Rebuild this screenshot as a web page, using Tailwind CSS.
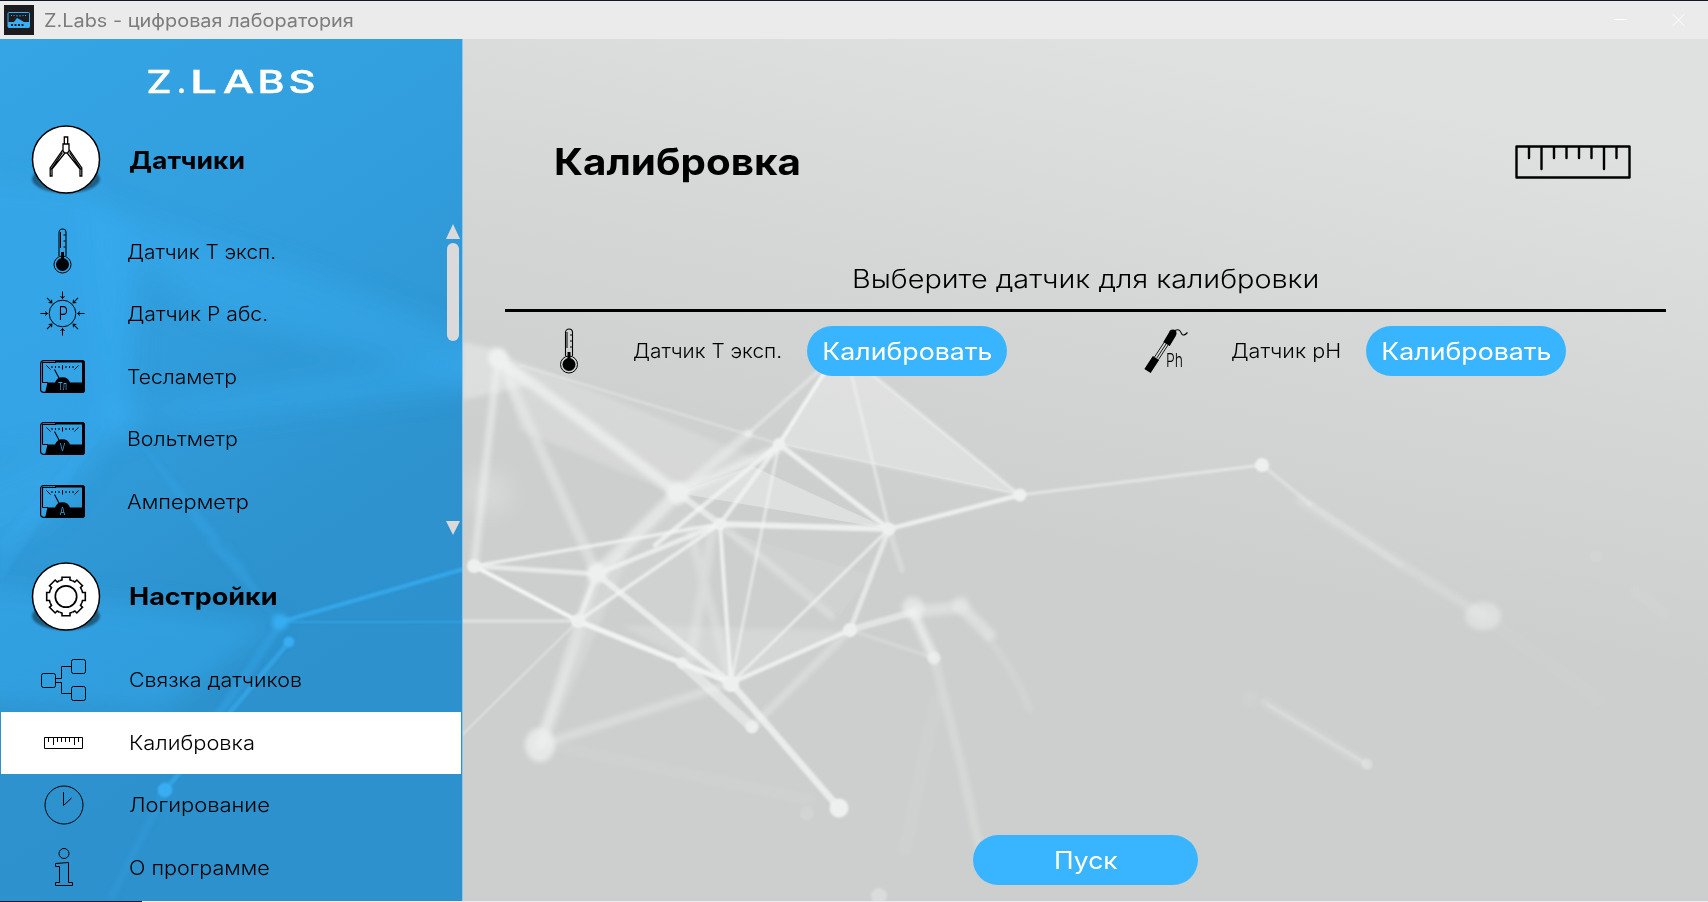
<!DOCTYPE html>
<html lang="ru">
<head>
<meta charset="utf-8">
<title>Z.Labs - цифровая лаборатория</title>
<script src="https://cdn.jsdelivr.net/npm/@tailwindcss/browser@4"></script>
</head>
<body class="w-[1708px] h-[902px] overflow-hidden font-['Inter','Noto_Sans',sans-serif] font-light text-black whitespace-nowrap">
<svg class="absolute size-0">
  <defs>
    <symbol id="thermo" viewBox="0 0 20 46" overflow="visible">
      <path d="M6.500 28V4.500a3.500 3.500 0 0 1 7 0V28" fill="none" stroke="#000" stroke-width="1.100"/>
      <circle cx="10" cy="36.500" r="8.500" fill="none" stroke="#000" stroke-width="1"/>
      <circle cx="10" cy="36.500" r="6.500"/>
      <path d="M8.500 24h3v8h-3z"/>
      <path d="M8 4v16M11 7h2.500M11 13h2.500M11 19h2.500" stroke="#000" stroke-width="1" fill="none"/>
    </symbol>
    <symbol id="meter" viewBox="0 0 45 33" overflow="visible">
      <rect x=".6" y=".6" width="43.800" height="31.800" rx="3" fill="none" stroke="#000" stroke-width="1.200"/>
      <path d="M15 0H42a3 3 0 0 1 3 3V30a3 3 0 0 1-3 3H5l2.500-10.500H15a8 8 0 0 1 15 0H42V2.500H15z"/>
      <path d="M2.500 22.500V2.500H16M2.500 22.500H8M19.500 19 14.500 9.500" fill="none" stroke="#000" stroke-width="1.100"/>
      <path d="M6.500 5.500l4 4M38.500 5.500l-4 4M22.500 5v4.500M12 6v2M15.500 6v2M19 6v2M26 6v2M29.500 6v2M33 6v2" stroke="#000" stroke-width="1" fill="none"/>
    </symbol>
    <g id="arr"><path d="M0-22v7M-2-17.500 0-15l2-2.500" fill="none" stroke="#000" stroke-width="1"/></g>
    <path id="tooth" d="M-6.500-15.800-4-16.500V-19.300H4V-16.500L6.500-15.800" fill="none" stroke="#000" stroke-width="1.600"/>
    <filter id="b1" x="-20%" y="-20%" width="140%" height="140%"><feGaussianBlur stdDeviation="1"/></filter>
    <filter id="b3" x="-20%" y="-20%" width="140%" height="140%"><feGaussianBlur stdDeviation="2.600"/></filter>
    <filter id="b9" x="-30%" y="-30%" width="160%" height="160%"><feGaussianBlur stdDeviation="12"/></filter>
    <linearGradient id="grey" gradientUnits="userSpaceOnUse" x1="1000" y1="20" x2="900" y2="520"><stop offset="0" stop-color="#dfe1e0"/><stop offset=".5" stop-color="#d5d7d6"/><stop offset="1" stop-color="#cdcfce"/></linearGradient>
    <linearGradient id="blue" x1="0" y1="0" x2=".35" y2="1"><stop offset="0" stop-color="#35a5e5"/><stop offset=".45" stop-color="#319cdb"/><stop offset=".75" stop-color="#2d92cd"/><stop offset="1" stop-color="#2d91cd"/></linearGradient>
  </defs>
</svg>

<div class="relative flex flex-col w-[1708px] h-[902px] bg-[#101828]">
  <header class="mt-px h-[38px] flex items-center bg-[#ebebeb] pl-1">
    <svg class="size-[30px]" viewBox="0 0 30 30"><rect width="30" height="30" fill="#1c1c1e"/><rect x="4" y="7.500" width="21.500" height="15" rx="1" fill="none" stroke="#39b0f5" stroke-width="1"/><path d="M4 17h6l3-4 2 1 5 3h5.500v5.500H4z" fill="#39b0f5"/><path d="M7 10l1 1M10 10v1M13 10v1.500M16 10v1.500M19 10v1M22 10l-1 1" stroke="#39b0f5"/><path d="M7 20h14" stroke="#1c1c1e" stroke-width="2" stroke-dasharray="2 1.500"/></svg>
    <h1 class="ml-[9.500px] text-[18px] font-normal text-[#7c7c7c] origin-left scale-x-[1.105]">Z.Labs - цифровая лаборатория</h1>
    <svg class="ml-auto mr-[22px] w-[72px] h-[14px]" viewBox="0 0 72 14" fill="none" stroke="#fff" stroke-width="1"><path d="M0 6.500h12.500M58.500 1l12 12M70.500 1l-12 12"/></svg>
  </header>

  <div class="relative flex h-[862px]">
    <svg class="absolute inset-0" width="1708" height="862" viewBox="0 39 1708 862">
      <rect y="39" width="1708" height="862" fill="url(#grey)"/>
      <g fill="#fff">
        <path d="M462 342 498 350 530 385 462 400z" opacity=".3" filter="url(#b3)"/>
        <g filter="url(#b3)">
          <path d="M498 352 760 460 678 495 520 430z" opacity=".18"/>
          <path d="M597 574 678 493 720 524 700 660 597 574z" opacity=".08"/>
          <path d="M620 625 850 630 731 683z" opacity=".16"/>
        </g>
        <ellipse cx="488" cy="493" rx="24" ry="22" opacity=".22" filter="url(#b9)"/>
        <path d="M779 444 840 348 1020 495z" opacity=".3"/>
        <path d="M678 493 752 466 889 529z" opacity=".35"/>
        <path d="M720 530 870 575 840 615z" opacity=".08"/>
      </g>
      <g stroke="#f4f6f5" fill="none" stroke-linecap="round">
        <g filter="url(#b3)">
          <path d="M498 358 678 493" stroke-width="11" opacity=".6"/>
          <path d="M498 358 474 566" stroke-width="7" opacity=".55"/>
          <path d="M500 360 597 574" stroke-width="10" opacity=".38"/>
          <path d="M678 493 597 574" stroke-width="13" opacity=".55"/>
          <path d="M678 493 748 434" stroke-width="9" opacity=".45"/>
          <path d="M678 493 779 448" stroke-width="9" opacity=".55"/>
          <path d="M597 574 540 745" stroke-width="11" opacity=".45"/>
          <path d="M620 560 545 735" stroke-width="13" opacity=".2"/>
          <path d="M540 745 731 683" stroke-width="8" opacity=".35"/>
          <path d="M690 530 731 683M712 530 690 660" stroke-width="9" opacity=".28"/>
          <path d="M720 524 832 616" stroke-width="7" opacity=".35"/>
          <path d="M913 612 961 607 990 635" stroke-width="12" opacity=".4"/>
          <path d="M985 635Q1015 670 1030 710" stroke-width="6" opacity=".15"/>
          <path d="M913 612 934 658" stroke-width="9" opacity=".65"/>
          <path d="M934 658 960 760 980 850" stroke-width="8" opacity=".25"/>
          <path d="M936 700 905 850" stroke-width="12" opacity=".08"/>
          <path d="M850 630 752 727" stroke-width="7" opacity=".35"/>
          <path d="M1300 500 1483 616" stroke-width="9" opacity=".2"/>
          <path d="M1483 616 1600 700" stroke-width="12" opacity=".06"/>
          <path d="M550 745 810 800" stroke-width="10" opacity=".08"/>
          <path d="M1635 590 1665 615" stroke-width="10" opacity=".08"/>
          <path d="M1264 702 1367 765" stroke-width="8" opacity=".2"/>
        </g>
        <g filter="url(#b1)">
          <path d="M779 444 840 348" stroke-width="4" opacity=".9"/>
          <path d="M748 434 840 352" stroke-width="4" opacity=".4"/>
          <path d="M520 365 779 444" stroke-width="2.500" opacity=".35"/>
          <path d="M840 348 1020 495M846 352 889 529" stroke-width="3.500" opacity=".5"/>
          <path d="M779 444 1020 495" stroke-width="2" opacity=".4"/>
          <path d="M779 444 889 529" stroke-width="5" opacity=".8"/>
          <path d="M779 444 720 524M779 444 655 545" stroke-width="4.500" opacity=".75"/>
          <path d="M779 444 731 683" stroke-width="3" opacity=".6"/>
          <path d="M720 524 889 529" stroke-width="6" opacity=".8"/>
          <path d="M889 529 1020 495" stroke-width="4.500" opacity=".8"/>
          <path d="M889 529 731 683" stroke-width="3" opacity=".7"/>
          <path d="M889 529 850 630" stroke-width="5" opacity=".6"/>
          <path d="M889 529 902 570" stroke-width="6" opacity=".25"/>
          <path d="M720 524 731 683" stroke-width="4" opacity=".8"/>
          <path d="M720 524 474 566M720 524 578 621" stroke-width="3.500" opacity=".75"/>
          <path d="M720 524 597 574" stroke-width="5" opacity=".7"/>
          <path d="M720 524 678 493" stroke-width="6" opacity=".6"/>
          <path d="M474 566 597 574" stroke-width="5" opacity=".65"/>
          <path d="M474 566 578 621" stroke-width="4" opacity="1"/>
          <path d="M597 574 578 621" stroke-width="5" opacity=".6"/>
          <path d="M597 574 731 683" stroke-width="6" opacity=".7"/>
          <path d="M578 621 682 663 731 683" stroke-width="5.500" opacity=".9"/>
          <path d="M682 663 752 727" stroke-width="10" opacity=".55"/>
          <path d="M731 683 839 808" stroke-width="7" opacity=".75"/>
          <path d="M731 683 850 630" stroke-width="4.500" opacity=".8"/>
          <path d="M850 630 913 612" stroke-width="7" opacity=".55"/>
          <path d="M850 630 934 658" stroke-width="4" opacity=".2"/>
          <path d="M462 621H578" stroke-width="3" opacity=".55"/>
          <path d="M578 621 462 735" stroke-width="2" opacity=".45"/>
          <path d="M1020 495 1262 465" stroke-width="3" opacity=".55"/>
          <path d="M1262 465 1310 504" stroke-width="4" opacity=".35"/>
          <path d="M1310 504 1400 565" stroke-width="6" opacity=".15"/>
          <path d="M1268 705 1365 763" stroke-width="3" opacity=".2"/>
        </g>
      </g>
      <g fill="#eef0ef">
        <g filter="url(#b3)"><circle cx="498" cy="358" r="10"/><circle cx="678" cy="493" r="11"/><circle cx="597" cy="573" r="10"/><ellipse cx="540" cy="745" rx="15" ry="17" opacity=".75"/><circle cx="913" cy="608" r="11" opacity=".65"/><circle cx="961" cy="605" r="9" opacity=".4"/><ellipse cx="1483" cy="616" rx="18" ry="14" opacity=".5"/><circle cx="1250" cy="699" r="8" opacity=".1"/></g>
        <g filter="url(#b1)"><circle cx="779" cy="444" r="6"/><circle cx="720" cy="524" r="6"/><circle cx="889" cy="529" r="6.500"/><circle cx="1020" cy="495" r="6.500"/><circle cx="474" cy="566" r="7"/><circle cx="578" cy="621" r="7"/><circle cx="731" cy="684" r="8"/><circle cx="682" cy="663" r="6" opacity=".7"/><circle cx="752" cy="727" r="6.500" opacity=".8"/><circle cx="839" cy="808" r="9.500"/><circle cx="850" cy="630" r="7"/><circle cx="934" cy="658" r="6.500" opacity=".7"/><circle cx="748" cy="434" r="4" opacity=".5"/><circle cx="1262" cy="465" r="7"/><circle cx="1367" cy="764" r="5.500" opacity=".35"/><circle cx="807" cy="813" r="7" opacity=".15"/><circle cx="879" cy="896" r="8" opacity=".4"/><circle cx="1596" cy="556" r="6" opacity=".12"/></g>
      </g>
    </svg>

    <aside class="relative w-[463px] h-full flex flex-col border-r border-[#8cc6ec]">
      <svg class="absolute inset-0" width="462" height="862" viewBox="0 39 462 862">
        <rect y="39" width="462" height="862" fill="url(#blue)"/>
        <g fill="#38adf2">
          <g filter="url(#b9)">
            <path d="M-60 180 90 190 130 230 120 430-60 470z" opacity=".42"/>
            <path d="M80 200 135 215 300 270 500 345 500 390 200 310 140 260 130 420 105 420z" opacity=".42"/>
            <path d="M-60 580 280 622 160 712-60 700z" opacity=".45"/>
            <path d="M120 410 500 350 500 385 200 420z" opacity=".45"/>
            <path d="M120 420-60 490-60 570 50 520z" opacity=".5"/>
            <circle cx="119" cy="418" r="18" opacity=".7"/>
          </g>
          <g filter="url(#b3)">
            <path d="M110 420 0 580 0 540zM125 420 225 545 250 570 200 530zM205 540 278 622 230 545z" opacity=".3"/>
            <circle cx="280" cy="622" r="8"/>
            <path d="M280 625 215 720" stroke="#38adf2" stroke-width="7" opacity=".4"/>
            <path d="M165 790 110 901" stroke="#38adf2" stroke-width="8" opacity=".18"/>
          </g>
          <g filter="url(#b1)" stroke="#38adf2">
            <path d="M280 622 474 566" stroke-width="4" opacity=".8"/>
            <path d="M280 622H474" stroke-width="2" opacity=".6"/>
            <path d="M289 642 165 790" stroke-width="5" opacity=".6"/>
            <circle cx="289" cy="642" r="5"/><circle cx="165" cy="790" r="7"/>
          </g>
        </g>
      </svg>
      <div class="relative flex flex-col h-full">
        <svg class="mt-[26px] ml-[142px]" width="178" height="34" viewBox="142 65 178 34" fill="#fff" font-family="Inter, sans-serif" font-weight="500" font-size="31.500" overflow="visible" stroke="#fff" stroke-width=".5"><text y="93"><tspan x="146.500" textLength="25" lengthAdjust="spacingAndGlyphs">Z</tspan><tspan x="177" textLength="9" lengthAdjust="spacingAndGlyphs">.</tspan><tspan x="190" textLength="27" lengthAdjust="spacingAndGlyphs">L</tspan><tspan x="223" textLength="31" lengthAdjust="spacingAndGlyphs">A</tspan><tspan x="257.500" textLength="27" lengthAdjust="spacingAndGlyphs">B</tspan><tspan x="288.500" textLength="27" lengthAdjust="spacingAndGlyphs">S</tspan></text></svg>

        <div class="mt-[22px] h-[78px] flex items-center pl-[27px]">
          <svg width="78" height="78" viewBox="-39 -38.500 78 78">
            <ellipse cy="19.500" rx="34" ry="14" opacity=".42" filter="url(#b1)"/>
            <circle r="33.500" fill="#fff" stroke="#000" stroke-width="1.500"/>
            <path d="M-1.700-22.500h3.400v7h-3.400zM-3-15.500h6v7l-1.500 2h-3l-1.500-2zM-3-10-15.800 8.500V16.500h1.800V9.500L-1.500-6M3-10 15.800 8.500V16.500H14V9.500L1.500-6M-3.500-7-15 10M3.500-7 15 10" fill="none" stroke="#000" stroke-width="1.300"/>
          </svg>
          <h2 class="ml-6 pt-px text-[24px] font-bold origin-left scale-x-[1.105]">Датчики</h2>
        </div>

        <div class="mt-[21px] h-[313px] flex">
          <ul class="flex-1">
            <li class="h-[62.500px] flex items-center"><svg class="ml-[40px]" width="45" height="46" viewBox="-12.500 0 45 46"><use href="#thermo" width="20" height="46"/></svg><span class="ml-[42px] pt-[2px] text-[19.600px] origin-left scale-x-[1.062]">Датчик Т эксп.</span></li>
            <li class="h-[62.500px] flex items-center"><svg class="ml-[40px]" width="45" height="45" viewBox="-22.500 -22.500 45 45"><circle r="13.300" fill="none" stroke="#000"/><use href="#arr"/><use href="#arr" transform="rotate(45)"/><use href="#arr" transform="rotate(90)"/><use href="#arr" transform="rotate(135)"/><use href="#arr" transform="rotate(180)"/><use href="#arr" transform="rotate(225)"/><use href="#arr" transform="rotate(270)"/><use href="#arr" transform="rotate(315)"/><text x=".8" y="6.800" text-anchor="middle" font-size="18.500" font-weight="300" textLength="9.500" lengthAdjust="spacingAndGlyphs">P</text></svg><span class="ml-[42px] pt-[2px] text-[19.600px] origin-left scale-x-[1.083]">Датчик Р абс.</span></li>
            <li class="h-[62.500px] flex items-center"><svg class="ml-[40px]" width="45" height="33" viewBox="0 0 45 33"><use href="#meter" width="45" height="33"/><text x="22.500" y="30" text-anchor="middle" font-size="11" font-weight="400" fill="#36a3e2" textLength="9" lengthAdjust="spacingAndGlyphs">Тл</text></svg><span class="ml-[42px] pt-[2px] text-[19.600px] origin-left scale-x-[1.075]">Тесламетр</span></li>
            <li class="h-[62.500px] flex items-center"><svg class="ml-[40px]" width="45" height="33" viewBox="0 0 45 33"><use href="#meter" width="45" height="33"/><text x="22.500" y="29" text-anchor="middle" font-size="10" font-weight="400" fill="#36a3e2" textLength="5.500" lengthAdjust="spacingAndGlyphs">V</text></svg><span class="ml-[42px] pt-[2px] text-[19.600px] origin-left scale-x-[1.09]">Вольтметр</span></li>
            <li class="h-[62.500px] flex items-center"><svg class="ml-[40px]" width="45" height="33" viewBox="0 0 45 33"><use href="#meter" width="45" height="33"/><text x="22.500" y="29.500" text-anchor="middle" font-size="10" font-weight="400" fill="#36a3e2" textLength="5.500" lengthAdjust="spacingAndGlyphs">A</text></svg><span class="ml-[42px] pt-[2px] text-[19.600px] origin-left scale-x-[1.11]">Амперметр</span></li>
          </ul>
          <div class="w-[14px] mr-[2px] pt-[4px] flex flex-col items-center">
            <svg class="shrink-0" width="14" height="15" viewBox="0 0 14 15"><path d="M7 0l7 15H0z" fill="#dadada"/></svg>
            <div class="mt-[4px] w-3 h-[98px] shrink-0 rounded-full bg-[#dadada]"></div>
            <svg class="mt-[180px] shrink-0" width="14" height="14" viewBox="0 0 14 14"><path d="M7 14 14 0H0z" fill="#dadada"/></svg>
          </div>
        </div>

        <div class="mt-[25px] h-[78px] flex items-center pl-[27px]">
          <svg width="78" height="78" viewBox="-39 -38.500 78 78">
            <ellipse cy="19.500" rx="34" ry="14" opacity=".42" filter="url(#b1)"/>
            <circle r="33.500" fill="#fff" stroke="#000" stroke-width="1.500"/>
            <circle r="10.700" fill="none" stroke="#000" stroke-width="1.700"/>
            <use href="#tooth"/><use href="#tooth" transform="rotate(45)"/><use href="#tooth" transform="rotate(90)"/><use href="#tooth" transform="rotate(135)"/><use href="#tooth" transform="rotate(180)"/><use href="#tooth" transform="rotate(225)"/><use href="#tooth" transform="rotate(270)"/><use href="#tooth" transform="rotate(315)"/>
          </svg>
          <h2 class="ml-6 text-[24px] font-bold origin-left scale-x-[1.124]">Настройки</h2>
        </div>

        <ul class="mt-[13px]">
          <li class="h-[62.500px] flex items-center pl-[41px]"><svg width="46" height="42" viewBox="0 0 46 42" fill="none" stroke="#000"><rect x=".5" y="14.500" width="14" height="14" rx="2"/><rect x="30.500" y=".5" width="14" height="14" rx="2"/><rect x="30.500" y="27.500" width="14" height="14" rx="2"/><path d="M14.500 19.500h6V7.500h10M14.500 23.500h6V34.500h10"/></svg><span class="ml-[42px] text-[19.600px] origin-left scale-x-[1.093]">Связка датчиков</span></li>
          <li class="mx-px h-[62px] flex items-center pl-[43px] bg-white"><svg width="39" height="12" viewBox="0 0 39 12" fill="none" stroke="#000"><path d="M.5.5h38v11H.5zM4.500 1v4M9.500 1v7M13.500 1v4M17.500 1v4M21.500 1v4M25.500 1v4M30.500 1v7M34.500 1v4"/></svg><span class="ml-[45.500px] pt-[2px] text-[19.600px] origin-left scale-x-[1.115]">Калибровка</span></li>
          <li class="h-[62.500px] flex items-center pl-[44px]"><svg width="40" height="40" viewBox="0 0 40 40" fill="none" stroke="#000"><circle cx="20" cy="20" r="19"/><path d="M19.500 7V20.500l8-7.500"/></svg><span class="ml-[44.500px] pt-[2px] text-[19.600px] origin-left scale-x-[1.12]">Логирование</span></li>
          <li class="h-[62.500px] flex items-center pl-[44px]"><svg width="40" height="40" viewBox="0 0 40 40" fill="none" stroke="#000"><circle cx="20" cy="6.500" r="5"/><path d="M11.500 19.500V16.500L24.500 15.500V35.500H28.500V38.500H11.500V35.500H15.500V19.500z"/></svg><span class="ml-[44.500px] pt-[2px] text-[19.600px] origin-left scale-x-[1.1]">О программе</span></li>
        </ul>
      </div>
    </aside>

    <main class="relative flex-1 flex flex-col">
      <div class="mt-[98px] h-[50px] flex items-center justify-between pl-[90.500px] pr-[77px]">
        <h2 class="text-[36.700px] font-bold origin-left scale-x-[1.1]">Калибровка</h2>
        <svg width="116" height="34" viewBox="0 0 116 34" fill="none" stroke="#000" stroke-width="2.400" stroke-linejoin="round" stroke-linecap="round"><path d="M1.500 1.500h113v31H1.500zM14 2v11M26.500 2v22M39 2v11M51.500 2v11M64 2v11M76.500 2v11M89 2v22M101.500 2v11"/></svg>
      </div>
      <div class="mt-[76px] ml-[42px] w-[1161px] h-[49px] border-b-[3px] border-black flex items-start justify-center text-[25px] leading-[32px]"><span class="scale-x-[1.153]">Выберите датчик для калибровки</span></div>
      <div class="mt-[14px] h-[50px] flex items-center text-[19.600px]">
        <svg class="ml-[96px]" width="20" height="46" viewBox="0 0 20 46"><use href="#thermo" width="20" height="46"/></svg>
        <span class="ml-[54px] w-[148px] pt-px origin-left scale-x-[1.062]">Датчик Т эксп.</span>
        <button class="ml-[26px] w-[200px] h-[50px] rounded-[25px] bg-[#39b5ff] text-white text-[24px] font-normal"><span class="inline-block pt-[2px] scale-x-[1.113]">Калибровать</span></button>
        <svg class="ml-[137px]" width="46" height="46" viewBox="0 0 46 46"><path d="M3.500 43 12 30M22.500 16 28.500 6" stroke="#000" stroke-width="7.500"/><circle cx="28.800" cy="5.200" r="3.700"/><path d="M10.500 29 21 13M14.500 31.500 25 15.500M12.800 30 23 14.500" stroke="#000" stroke-width=".9" fill="none"/><path d="M31 2.500c4-2 5 0 6.500 3s4 1 6-1" fill="none" stroke="#000" stroke-width="1.100"/><text x="22" y="38.500" font-size="19" font-weight="300" textLength="17" lengthAdjust="spacingAndGlyphs">Ph</text></svg>
        <span class="ml-[41px] w-[109px] pt-px origin-left scale-x-[1.1]">Датчик pH</span>
        <button class="ml-[26px] w-[200px] h-[50px] rounded-[25px] bg-[#39b5ff] text-white text-[24px] font-normal"><span class="inline-block pt-[2px] scale-x-[1.113]">Калибровать</span></button>
      </div>
      <button class="mt-auto mb-[16px] ml-[510px] w-[225px] h-[50px] rounded-[25px] bg-[#39b5ff] text-white text-[24px] font-normal"><span class="inline-block pt-[2px] scale-x-[1.1]">Пуск</span></button>
    </main>
  </div>
  <div class="h-px flex"><div class="w-[142px] bg-[#101828]"></div><div class="flex-1 bg-[#e8ecee]"></div></div>
</div>
</body>
</html>
